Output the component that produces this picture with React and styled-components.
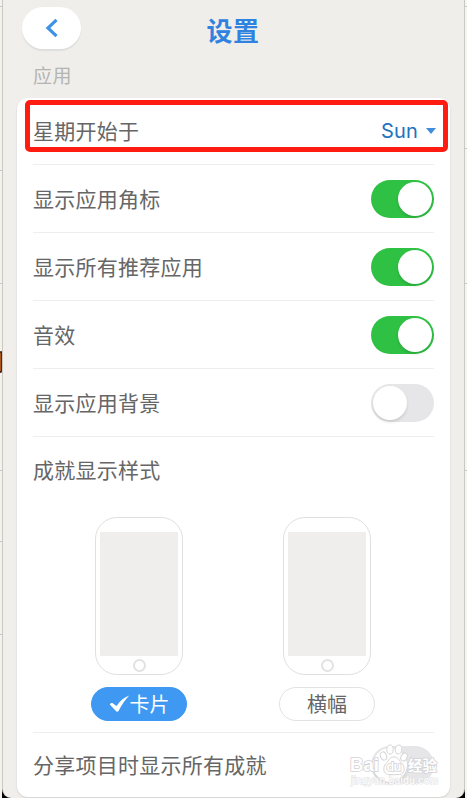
import React from "react";
import styled, { createGlobalStyle } from "styled-components";

const GlobalStyle = createGlobalStyle`
  * {
    box-sizing: border-box;
  }

  body {
    background-color: #f3f2ee;
    font-family: "Noto Sans CJK SC", sans-serif;
    margin: 0;
    overflow: hidden;
  }
`;

const Page = styled.div`
  display: flex;
  height: 798px;
  overflow: hidden;
  width: 467px;
`;

const Edge = styled.div`
  background-color: ${({ $color }) => $color};
  flex: none;
  overflow: hidden;
  position: relative;
  width: ${({ $width }) => $width}px;
`;

const EdgeLine = styled.div`
  background-color: #c9c9c6;
  height: 1px;
  left: 0;
  position: absolute;
  right: 0;
  top: ${({ $top }) => $top}px;
`;

const EdgeLabel = styled.span`
  color: #4a2414;
  font-size: 25px;
  font-weight: 400;
  line-height: 30px;
  position: absolute;
  right: -3px;
  top: 345px;
`;

const Backdrop = styled.div`
  background-color: #000;
  flex: 1;
  min-width: 0;
`;

const Panel = styled.main`
  background: linear-gradient(90deg, #f1eeeb, #efeeeb 20%, #efeeeb);
  border: 1px solid #c8c8c6;
  border-bottom: 0;
  border-radius: 0 0 9px 9px;
  border-top: 0;
  display: flex;
  flex-direction: column;
  height: 798px;
  padding: 7px 14px 1px;
`;

const Header = styled.header`
  align-items: center;
  display: grid;
  grid-template-columns: 60px 1fr 60px;
  height: 46px;
  padding: 0 5px 4px;
`;

const BackButton = styled.button`
  align-items: center;
  background-color: #fff;
  border: 0;
  border-radius: 21px;
  box-shadow: 0 2px 1px #dededd;
  display: flex;
  height: 42px;
  justify-content: center;
  padding: 0;
  width: 59px;
`;

const Title = styled.h1`
  color: #2f82df;
  font-size: 26px;
  font-weight: 700;
  letter-spacing: 0.6px;
  line-height: 36px;
  margin: 3px 1px 0 0;
  text-align: center;
`;

const SectionTitle = styled.h2`
  color: #b4b4b2;
  font-size: 19px;
  font-weight: 400;
  height: 45px;
  letter-spacing: 0.6px;
  line-height: 44px;
  margin: 0;
  padding-left: 16px;
`;

const Card = styled.section`
  background-color: #fff;
  border-radius: 11px;
  box-shadow: 0 1px 2px #cfcfcd;
  flex: 1;
  padding: 0 16px;
`;

const Row = styled.div`
  align-items: center;
  border-bottom: 1px solid ${({ $last }) => ($last ? "transparent" : "#eeeeee")};
  display: flex;
  height: ${({ $height }) => $height || 68}px;
  justify-content: space-between;
  position: relative;
`;

const Label = styled.span`
  color: #666;
  font-size: 21px;
  letter-spacing: 0.25px;
  line-height: 30px;
  margin-bottom: 2px;
`;

const Select = styled.button`
  align-items: center;
  background: none;
  border: 0;
  color: #2272bd;
  display: flex;
  font-family: Inter, sans-serif;
  font-size: 20px;
  gap: 8px;
  letter-spacing: 0.2px;
  margin-right: -2px;
  padding: 0;
`;

const Caret = styled.span`
  border-left: 5.5px solid transparent;
  border-right: 5.5px solid transparent;
  border-top: 6px solid #3f8edb;
`;

const Highlight = styled.div`
  border: 5px solid #ff1d12;
  border-radius: 5px;
  height: 52px;
  left: -8px;
  position: absolute;
  top: 2px;
  width: 423px;
`;

const Switch = styled.span`
  background-color: ${({ $on }) => ($on ? "#2fc143" : "#e6e6e8")};
  border-radius: 19px;
  display: flex;
  height: 38px;
  justify-content: ${({ $on }) => ($on ? "flex-end" : "flex-start")};
  padding: 2px;
  width: 63px;
`;

const Knob = styled.span`
  background-color: #fff;
  border-radius: 50%;
  box-shadow: 0 2px 3px rgba(0, 0, 0, 0.12);
  height: 34px;
  width: 34px;
`;

const StyleBlock = styled.div`
  border-bottom: 1px solid #eeeeee;
  height: 296px;
  padding-top: 17px;
`;

const StyleOptions = styled.div`
  display: flex;
  gap: 92px;
  padding: 33px 0 0 58px;
`;

const StyleOption = styled.div`
  align-items: center;
  display: flex;
  flex-direction: column;
  gap: 12px;
  width: 96px;
`;

const Phone = styled.div`
  align-items: center;
  border: 1.5px solid #e0e0e0;
  border-radius: 22px;
  display: flex;
  flex-direction: column;
  gap: 3px;
  height: 158px;
  padding-top: 14px;
  width: 88px;
`;

const PhoneScreen = styled.div`
  background-color: #efeeec;
  height: 124px;
  width: 78px;
`;

const HomeButton = styled.div`
  border: 2px solid #e2e2e2;
  border-radius: 50%;
  height: 13px;
  width: 13px;
`;

const Pill = styled.button`
  align-items: center;
  background-color: ${({ $selected }) => ($selected ? "#3f99f2" : "#fff")};
  border: 1px solid ${({ $selected }) => ($selected ? "#3f99f2" : "#e2e2e2")};
  border-radius: 17px;
  color: ${({ $selected }) => ($selected ? "#fff" : "#666")};
  display: flex;
  font-family: inherit;
  font-size: 20px;
  height: 34px;
  justify-content: center;
  line-height: 30px;
  padding: 0;
  width: 96px;
`;

const Watermark = styled.div`
  color: #fff;
  font-family: "Liberation Sans", "Noto Sans CJK SC", sans-serif;
  height: 48px;
  position: absolute;
  right: -6px;
  top: 9px;
  width: 94px;
`;

const switches = [
  { label: "显示应用角标", on: true },
  { label: "显示所有推荐应用", on: true },
  { label: "音效", on: true },
  { label: "显示应用背景", on: false },
];

const Toggle = ({ on }) => (
  <Switch $on={on}>
    <Knob />
  </Switch>
);

const BackIcon = () => (
  <svg width="14" height="20" viewBox="0 0 14 20" fill="none">
    <path d="M11.500 1.800 3 10l8.500 8.200" stroke="#3f93e6" strokeWidth="3.200" />
  </svg>
);

const CheckIcon = () => (
  <svg width="21" height="18" viewBox="0 0 21 18">
    <path
      d="M.8 9.500c.9-1.600 2.200-1.900 3.200-1.100L7.500 11C11 6 15 2.300 20.200.5 16 5 12.500 10 9.500 16c-.6 1-1.900 1-2.600.1Z"
      fill="#fff"
    />
  </svg>
);

const PawMark = () => (
  <Watermark>
    <svg width="94" height="48" viewBox="0 0 94 48" fill="#fff">
      <g stroke="#d6d6d8" strokeWidth="1">
        <ellipse cx="37.500" cy="14" rx="3" ry="4.200" transform="rotate(-22 37.500 14)" />
        <ellipse cx="44" cy="7.500" rx="3.200" ry="4.500" />
        <ellipse cx="52.500" cy="7.500" rx="3.200" ry="4.500" transform="rotate(8 52.500 7.500)" />
        <ellipse cx="58" cy="15" rx="3" ry="4.200" transform="rotate(24 58 15)" />
        <path d="M48 15c-4.500 0-5 3.500-8 6.500-3.500 3.500-3 10.500 2.500 11 4 .3 7 .3 11 0 5.500-.5 6-7.500 2.500-11-3-3-3.500-6.500-8-6.500Z" />
      </g>
      <g stroke="#d2d2d5" strokeWidth="1.500" paintOrder="stroke" fontWeight="700">
        <text x="4" y="29" fontSize="18" textLength="29" lengthAdjust="spacingAndGlyphs">
          Bai
        </text>
        <text x="40.500" y="29" fontSize="13" textLength="15">
          du
        </text>
        <text x="62" y="29" fontSize="14.500" textLength="29">
          经验
        </text>
      </g>
      <text
        x="5"
        y="42"
        fontSize="10"
        textLength="87"
        stroke="#e0e0e2"
        strokeWidth="1"
        paintOrder="stroke"
      >
        jingyan.baidu.com
      </text>
    </svg>
  </Watermark>
);

export default () => {
  return (
    <>
      <GlobalStyle />
      <Page>
        <Edge $width={2} $color="#f5f3e9">
          {[6, 170, 283, 470, 541, 634].map((top) => (
            <EdgeLine key={top} $top={top} />
          ))}
          <EdgeLabel>司</EdgeLabel>
        </Edge>
        <Backdrop>
          <Panel>
            <Header>
              <BackButton>
                <BackIcon />
              </BackButton>
              <Title>设置</Title>
            </Header>
            <SectionTitle>应用</SectionTitle>
            <Card>
              <Row $height={67}>
                <Label>星期开始于</Label>
                <Select>
                  Sun
                  <Caret />
                </Select>
                <Highlight />
              </Row>
              {switches.map(({ label, on }) => (
                <Row key={label}>
                  <Label>{label}</Label>
                  <Toggle on={on} />
                </Row>
              ))}
              <StyleBlock>
                <Label>成就显示样式</Label>
                <StyleOptions>
                  <StyleOption>
                    <Phone>
                      <PhoneScreen />
                      <HomeButton />
                    </Phone>
                    <Pill $selected>
                      <CheckIcon />
                      卡片
                    </Pill>
                  </StyleOption>
                  <StyleOption>
                    <Phone>
                      <PhoneScreen />
                      <HomeButton />
                    </Phone>
                    <Pill>横幅</Pill>
                  </StyleOption>
                </StyleOptions>
              </StyleBlock>
              <Row $height={64} $last>
                <Label>分享项目时显示所有成就</Label>
                <Toggle on={false} />
                <PawMark />
              </Row>
            </Card>
          </Panel>
        </Backdrop>
        <Edge $width={2} $color="#f4f4f1">
          {[6, 148, 283, 470].map((top) => (
            <EdgeLine key={top} $top={top} />
          ))}
        </Edge>
      </Page>
    </>
  );
};
